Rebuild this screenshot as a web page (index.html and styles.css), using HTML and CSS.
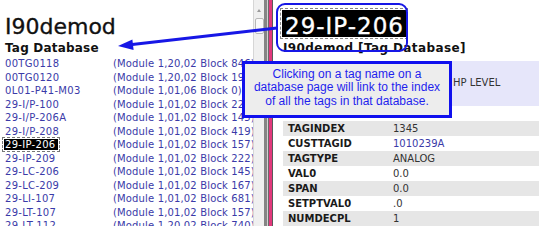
FILE: index.html
```html
<!DOCTYPE html>
<html>
<head>
<meta charset="utf-8">
<title>29-IP-206</title>
<link rel="stylesheet" href="styles.css">
</head>
<body>
<div class="page">
  <div class="left">
    <h1 class="db-title">I90demod</h1>
    <h2 class="db-sub">Tag Database</h2>
    <div class="tag-list">
      <a class="tag">00TG0118</a><span class="mod">(Module 1,20,02 Block 846)</span>
      <a class="tag">00TG0120</a><span class="mod">(Module 1,20,02 Block 191)</span>
      <a class="tag">0L01-P41-M03</a><span class="mod">(Module 1,01,06 Block 0)</span>
      <a class="tag">29-I/P-100</a><span class="mod">(Module 1,01,02 Block 227)</span>
      <a class="tag">29-I/P-206A</a><span class="mod">(Module 1,01,02 Block 145)</span>
      <a class="tag">29-I/P-208</a><span class="mod">(Module 1,01,02 Block 419)</span>
      <a class="tag"><span class="selected">29-IP-206</span></a><span class="mod">(Module 1,01,02 Block 157)</span>
      <a class="tag">29-IP-209</a><span class="mod">(Module 1,01,02 Block 222)</span>
      <a class="tag">29-LC-206</a><span class="mod">(Module 1,01,02 Block 145)</span>
      <a class="tag">29-LC-209</a><span class="mod">(Module 1,01,02 Block 167)</span>
      <a class="tag">29-LI-107</a><span class="mod">(Module 1,01,02 Block 681)</span>
      <a class="tag">29-LT-107</a><span class="mod">(Module 1,01,02 Block 157)</span>
      <a class="tag">29-LT-112</a><span class="mod">(Module 1,20,02 Block 740)</span>
    </div>
  </div>
  <div class="scrollbar">
    <span class="sb-up"></span>
    <span class="sb-thumb"></span>
  </div>
  <div class="divider">
    <span class="strip s1"></span>
    <span class="strip s2"></span>
    <span class="strip s3"></span>
    <span class="strip s4"></span>
    <span class="strip s5"></span>
  </div>
  <div class="right">
    <h1 class="tag-title"><span class="sel-title">29-IP-206</span></h1>
    <h2 class="tag-sub">I90demod [Tag Database]</h2>
    <div class="desc"><span class="desc-text">HP LEVEL</span></div>
    <table class="props">
      <tr><td class="k">TAGINDEX</td><td class="v">1345</td></tr>
      <tr><td class="k">CUSTTAGID</td><td class="v link">1010239A</td></tr>
      <tr><td class="k">TAGTYPE</td><td class="v">ANALOG</td></tr>
      <tr><td class="k">VAL0</td><td class="v">0.0</td></tr>
      <tr><td class="k">SPAN</td><td class="v">0.0</td></tr>
      <tr><td class="k">SETPTVAL0</td><td class="v">.0</td></tr>
      <tr><td class="k">NUMDECPL</td><td class="v">1</td></tr>
    </table>
  </div>
</div>

<div class="ring"></div>
<svg class="arrow" width="539" height="226" viewBox="0 0 539 226">
  <line x1="277" y1="28" x2="130" y2="44.7" stroke="#1717e6" stroke-width="3"/>
  <polygon points="118,46 133.6,50 132.4,39.5" fill="#1717e6"/>
</svg>
<div class="callout">Clicking on a tag name on a<br>database page will link to the index<br>of all the tags in that database.</div>
</body>
</html>
```

FILE: styles.css
```css
* { box-sizing: border-box; }

html, body {
  margin: 0;
  padding: 0;
}

body {
  width: 539px;
  height: 226px;
  overflow: hidden;
  position: relative;
  background: #fff;
  font-family: "DejaVu Sans", Verdana, sans-serif;
}

.page {
  display: flex;
  height: 226px;
}

/* ---------- left pane ---------- */
.left {
  width: 253px;
  flex: none;
  overflow: hidden;
  padding: 13px 0 0 5px;
}

.db-title {
  margin: 0;
  font-size: 22px;
  line-height: 27px;
  font-weight: normal;
  color: #111;
  -webkit-text-stroke: 0.35px #111;
}

.db-sub {
  margin: 1px 0 0;
  font-size: 12px;
  line-height: 14px;
  font-weight: bold;
  color: #111;
  letter-spacing: 0.2px;
}

.tag-list {
  margin-top: 2px;
  display: grid;
  grid-template-columns: 108px max-content;
  font-size: 10px;
  line-height: 13.5px;
  color: #3a3aa8;
  white-space: nowrap;
}

.tag {
  color: #3a3aa8;
  letter-spacing: 0.3px;
}

.mod {
  letter-spacing: 0.15px;
}

.selected {
  background: #000;
  color: #fff;
  padding: 0 2px 0 1px;
  margin-left: -1px;
  outline: 1px dashed #777;
  outline-offset: 1px;
}

/* ---------- scrollbar ---------- */
.scrollbar {
  width: 11px;
  flex: none;
  background: #f0f0f0;
  border-left: 1px solid #d6d6d6;
  display: flex;
  flex-direction: column;
  align-items: center;
  padding-top: 9px;
}

.sb-up {
  width: 0;
  height: 0;
  border-left: 2px solid transparent;
  border-right: 2px solid transparent;
  border-bottom: 3px solid #9a9a9a;
}

.sb-thumb {
  margin-top: 6px;
  width: 9px;
  height: 16px;
  background: #fafafa;
  border: 1px solid #b8b8b8;
  border-radius: 2px;
}

/* ---------- divider ---------- */
.divider {
  display: flex;
  flex: none;
}

.strip { display: block; height: 100%; }
.s1 { width: 3px; background: #858585; }
.s2 { width: 1px; background: #d2d2d2; }
.s3 { width: 1px; background: #6a6a6a; }
.s4 { width: 3px; background: #e2387c; }
.s5 { width: 1px; background: #5a5a5a; }

/* ---------- right pane ---------- */
.right {
  flex: 1;
  min-width: 0;
  padding: 10px 0 0 10px;
}

.tag-title {
  margin: 0;
  height: 27px;
  font-size: 23px;
  font-weight: normal;
}

.sel-title {
  display: inline-block;
  height: 27px;
  margin-left: -1px;
  padding: 6px 2px 0 3px;
  line-height: 21px;
  background: #000;
  color: #fff;
  letter-spacing: 1px;
  -webkit-text-stroke: 0.35px #fff;
  outline: 1px dashed #888;
  outline-offset: 1px;
}

.tag-sub {
  margin: 4px 0 0;
  font-size: 12px;
  line-height: 14px;
  font-weight: bold;
  color: #111;
  letter-spacing: 0.4px;
  white-space: nowrap;
}

.desc {
  margin-top: 6px;
  height: 45px;
  background: #e6e6fa;
  padding: 15px 0 0 170px;
  font-size: 10px;
  line-height: 14px;
  color: #333;
}

.props {
  margin-top: 15px;
  width: 100%;
  border-collapse: collapse;
  font-size: 10px;
}

.props tr { height: 15px; }
.props tr:nth-child(odd) { background: #e6e6e6; }

.props td {
  padding: 0 0 0 5px;
  line-height: 15px;
  white-space: nowrap;
}

.props .k {
  width: 105px;
  font-weight: bold;
  color: #1a1a1a;
}

.props .v { color: #333; }
.props .link { color: #3a3aa8; }

/* ---------- annotation overlays ---------- */
.ring {
  position: absolute;
  left: 276px;
  top: 3px;
  width: 132px;
  height: 49px;
  border: 2px solid #1717e6;
  border-radius: 9px;
}

.arrow {
  position: absolute;
  left: 0;
  top: 0;
  pointer-events: none;
}

.callout {
  position: absolute;
  left: 242px;
  top: 61px;
  width: 210px;
  height: 57px;
  border: 3px solid #1010ee;
  background: #ededed;
  padding-top: 4px;
  text-align: center;
  font-family: "Liberation Sans", Arial, sans-serif;
  font-size: 12px;
  line-height: 13.4px;
  color: #1f1fee;
  white-space: nowrap;
}
```
